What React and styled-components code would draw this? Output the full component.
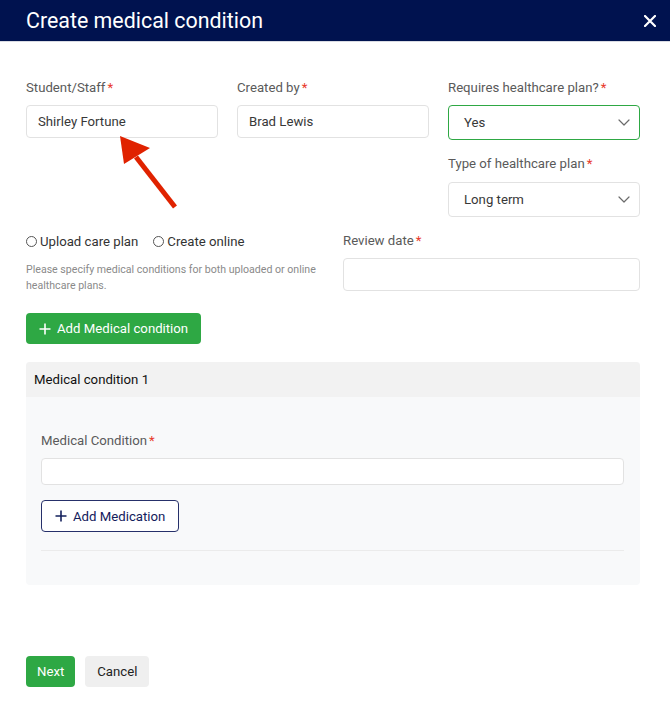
import React from 'react'
import styled, { createGlobalStyle } from 'styled-components'

const GlobalStyle = createGlobalStyle`
  html, body {
    margin: 0;
    padding: 0;
    background: #ffffff;
  }
  body {
    font-family: Roboto, "Noto Sans", "Liberation Sans", sans-serif;
    color: #333;
  }
  * { box-sizing: border-box; }
`

const Page = styled.div`
  position: relative;
  width: 670px;
  min-height: 715px;
  background: #fff;
`

const Header = styled.div`
  height: 42px;
  background: #00124f;
  display: flex;
  align-items: center;
  justify-content: space-between;
  padding: 0 13px 0 26px;
  border-bottom: 1px solid #d9dbe3;
`

const Title = styled.h2`
  margin: 0;
  font-size: 21.4px;
  font-weight: 400;
  color: #fff;
`

const Close = styled.button`
  border: 0;
  background: transparent;
  padding: 0;
  width: 14px;
  height: 14px;
  display: flex;
  align-items: center;
  justify-content: center;
  cursor: pointer;
`

const Body = styled.div`
  padding: 38px 30px 0 26px;
`

const TopGrid = styled.div`
  display: grid;
  grid-template-columns: repeat(3, 1fr);
  column-gap: 19px;
  align-items: start;
`

const Stack = styled.div`
  display: flex;
  flex-direction: column;
  gap: ${p => p.$gap || 16}px;
`

const Field = styled.div`
  display: flex;
  flex-direction: column;
`

const Label = styled.label`
  font-size: 13.2px;
  line-height: 16px;
  color: #5a5a5a;
  margin-bottom: ${p => p.$gap || 9}px;
`

const Star = styled.span`
  color: #e8392b;
  margin-left: 2px;
`

const Input = styled.div`
  height: ${p => p.$h || 33}px;
  border: 1px solid #e2e2e2;
  border-radius: 4px;
  background: #fff;
  display: flex;
  align-items: center;
  padding: 0 11px;
  font-size: 13.2px;
  color: #383838;
`

const Select = styled.div`
  height: 35px;
  border: ${p => (p.$focus ? '1.5px solid #2ea844' : '1px solid #e2e2e2')};
  border-radius: 4px;
  background: #fff;
  display: flex;
  align-items: center;
  justify-content: space-between;
  padding: 0 9px 0 15px;
  font-size: 13.2px;
  color: #383838;
`

const SecondGrid = styled.div`
  display: grid;
  grid-template-columns: 1fr 1fr;
  column-gap: 20px;
  margin-top: 16px;
`

const RadioRow = styled.div`
  display: flex;
  align-items: center;
  gap: 15px;
  height: 16px;
  font-size: 13.2px;
  color: #333;
`

const RadioItem = styled.label`
  display: flex;
  align-items: center;
  gap: 3px;
`

const RadioDot = styled.span`
  width: 11px;
  height: 11px;
  border-radius: 50%;
  border: 1px solid #555;
  background: #fff;
`

const Hint = styled.p`
  margin: 13px 0 0;
  font-size: 10.6px;
  line-height: 16px;
  color: #8a8a8a;
  white-space: nowrap;
`

const Button = styled.button`
  display: inline-flex;
  align-items: center;
  gap: 6px;
  height: ${p => p.$h || 31}px;
  padding: 0 ${p => p.$px || 13}px;
  border-radius: 4px;
  font-family: inherit;
  font-size: 13.2px;
  cursor: pointer;
  border: ${p => (p.$variant === 'outline' ? '1px solid #26306a' : '0')};
  background: ${p =>
    p.$variant === 'primary' ? '#2ea844' : p.$variant === 'light' ? '#efefef' : '#fff'};
  color: ${p =>
    p.$variant === 'primary' ? '#fff' : p.$variant === 'outline' ? '#13205c' : '#222'};
`

const PrimaryRow = styled.div`
  margin-top: 19px;
`

const Card = styled.section`
  margin-top: 18px;
  border-radius: 4px;
  background: #f8f9fa;
  overflow: hidden;
`

const CardHead = styled.div`
  height: 35px;
  background: #f2f2f2;
  display: flex;
  align-items: center;
  padding-left: 8px;
  font-size: 13.2px;
  color: #111;
`

const CardBody = styled.div`
  padding: 36px 16px 34px 15px;
`

const MedicationRow = styled.div`
  margin-top: 15px;
`

const Divider = styled.hr`
  border: 0;
  border-top: 1px solid #ebebeb;
  margin: 18px 0 0;
`

const Footer = styled.div`
  display: flex;
  gap: 10px;
  margin-top: 71px;
`

const Overlay = styled.svg`
  position: absolute;
  left: 0;
  top: 0;
  pointer-events: none;
`

const Chevron = () => (
  <svg width="12" height="7" viewBox="0 0 12 7" fill="none">
    <path d="M1 1l5 5 5-5" stroke="#6b6b6b" strokeWidth="1.2" strokeLinecap="round" strokeLinejoin="round" />
  </svg>
)

const Plus = ({ color }) => (
  <svg width="12" height="12" viewBox="0 0 12 12">
    <path d="M6 0.5v11M0.5 6h11" stroke={color} strokeWidth="1.6" />
  </svg>
)

export default function App() {
  return (
    <Page>
      <GlobalStyle />
      <Header>
        <Title>Create medical condition</Title>
        <Close aria-label="close">
          <svg width="12" height="12" viewBox="0 0 12 12">
            <path d="M1 1l10 10M11 1L1 11" stroke="#fff" strokeWidth="2.2" strokeLinecap="round" />
          </svg>
        </Close>
      </Header>

      <Body>
        <TopGrid>
          <Field>
            <Label>Student/Staff<Star>*</Star></Label>
            <Input>Shirley Fortune</Input>
          </Field>
          <Field>
            <Label>Created by<Star>*</Star></Label>
            <Input>Brad Lewis</Input>
          </Field>
          <Stack $gap={16}>
            <Field>
              <Label>Requires healthcare plan?<Star>*</Star></Label>
              <Select $focus>
                Yes
                <Chevron />
              </Select>
            </Field>
            <Field>
              <Label $gap={10}>Type of healthcare plan<Star>*</Star></Label>
              <Select>
                Long term
                <Chevron />
              </Select>
            </Field>
          </Stack>
        </TopGrid>

        <SecondGrid>
          <div>
            <RadioRow>
              <RadioItem><RadioDot />Upload care plan</RadioItem>
              <RadioItem><RadioDot />Create online</RadioItem>
            </RadioRow>
            <Hint>
              Please specify medical conditions for both uploaded or online
              <br />
              healthcare plans.
            </Hint>
          </div>
          <Field>
            <Label>Review date<Star>*</Star></Label>
            <Input />
          </Field>
        </SecondGrid>

        <PrimaryRow>
          <Button $variant="primary" $px={13}>
            <Plus color="#fff" />
            Add Medical condition
          </Button>
        </PrimaryRow>

        <Card>
          <CardHead>Medical condition 1</CardHead>
          <CardBody>
            <Field>
              <Label $gap={9}>Medical Condition<Star>*</Star></Label>
              <Input $h={27} />
            </Field>
            <MedicationRow>
              <Button $variant="outline" $h={32} $px={13}>
                <Plus color="#13205c" />
                Add Medication
              </Button>
            </MedicationRow>
            <Divider />
          </CardBody>
        </Card>

        <Footer>
          <Button $variant="primary" $px={11}>Next</Button>
          <Button $variant="light" $px={12}>Cancel</Button>
        </Footer>
      </Body>

      <Overlay width="670" height="715" viewBox="0 0 670 715">
        <line x1="136" y1="157" x2="175" y2="207" stroke="#e02200" strokeWidth="5" />
        <polygon points="120,136 150,148 124,164" fill="#e02200" />
      </Overlay>
    </Page>
  )
}
